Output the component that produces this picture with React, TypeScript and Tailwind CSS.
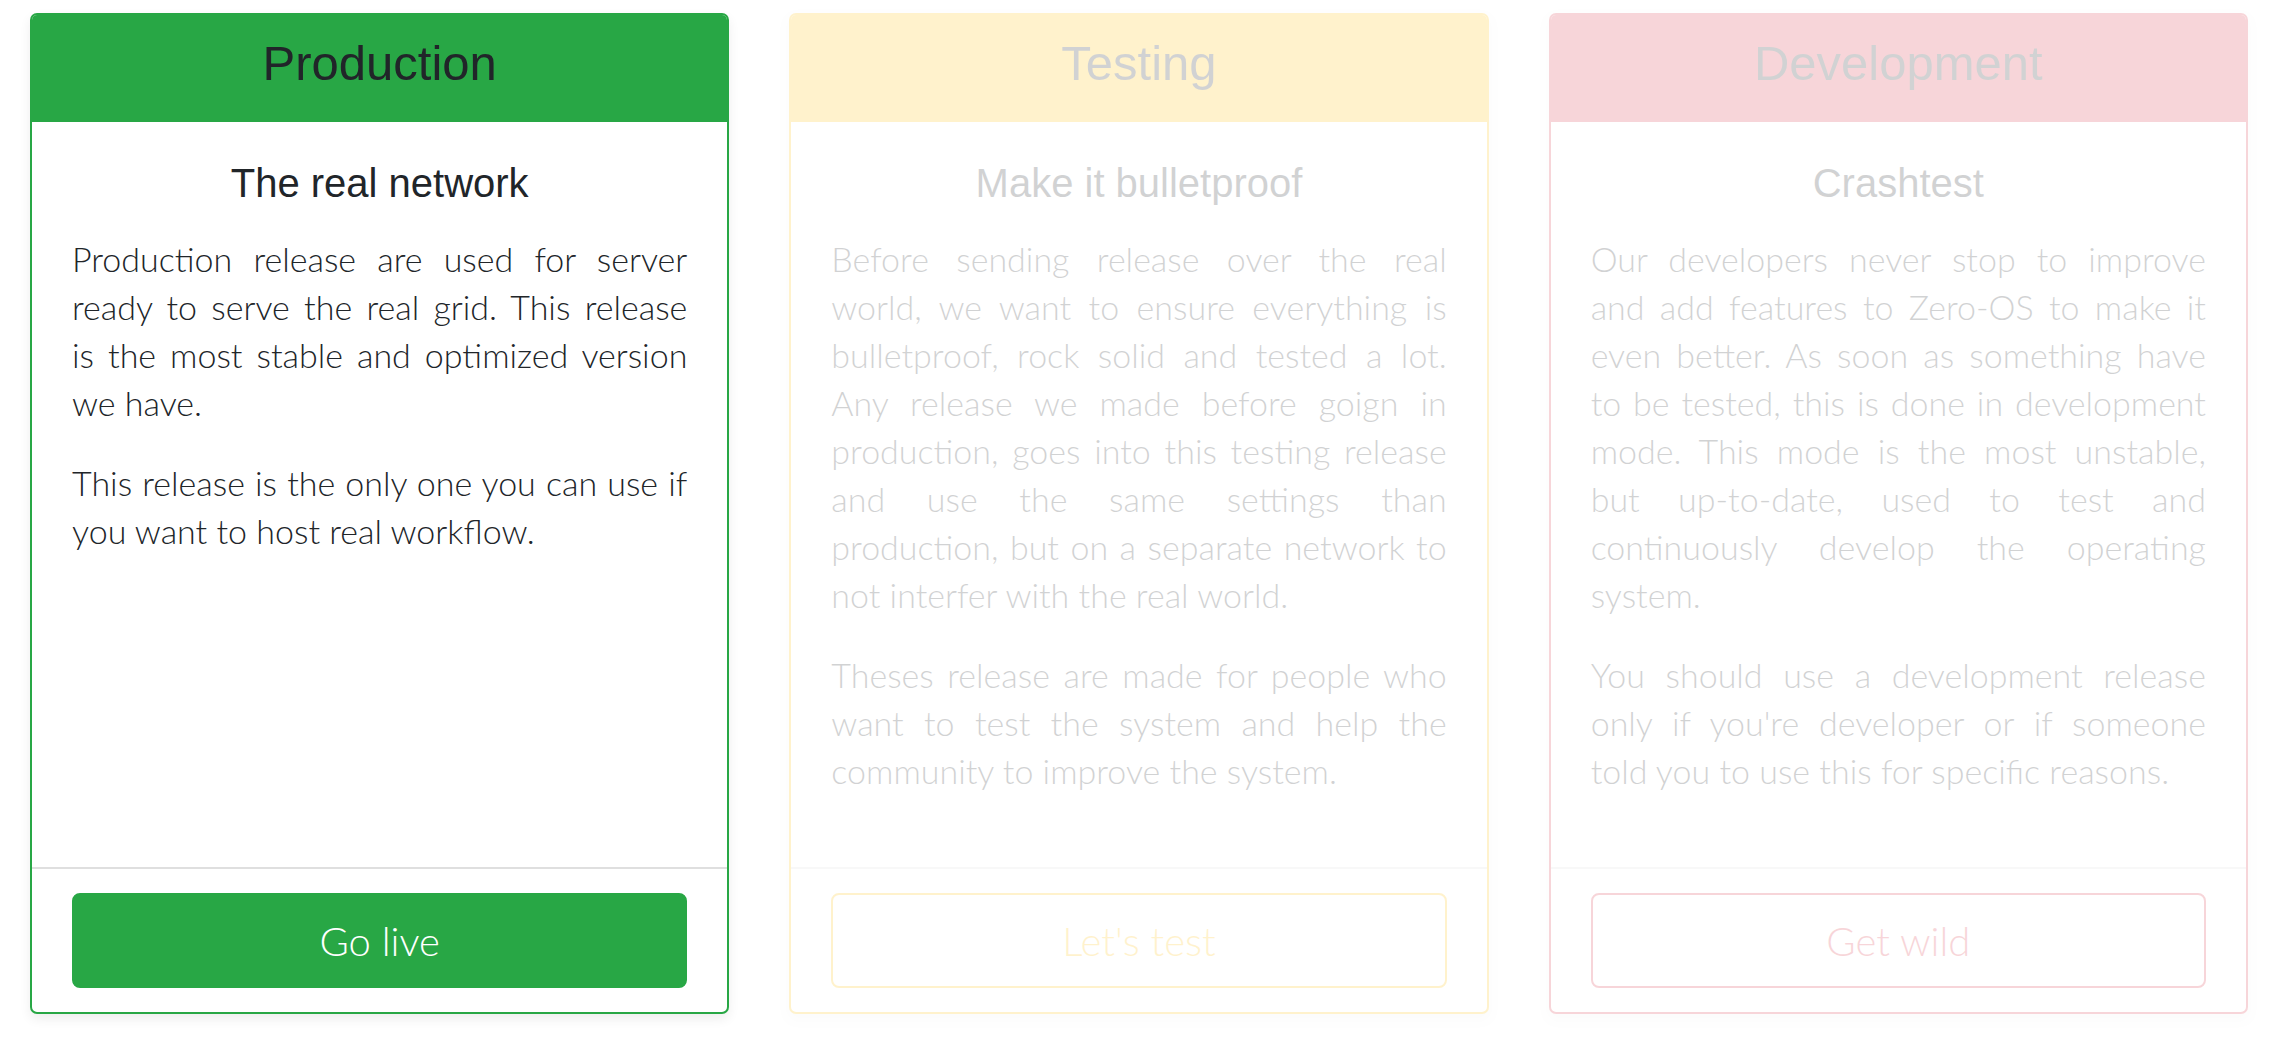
import React from "react";

type Card = {
  title: string;
  subtitle: string;
  paragraphs: string[][];
  button: string;
  cardCls: string;
  headerCls: string;
  buttonCls: string;
};

const cards: Card[] = [
  {
    title: "Production",
    subtitle: "The real network",
    paragraphs: [
      [
        "Production release are used for server",
        "ready to serve the real grid. This release",
        "is the most stable and optimized version",
        "we have.",
      ],
      ["This release is the only one you can use if", "you want to host real workflow."],
    ],
    button: "Go live",
    cardCls: "border-[#28a745]",
    headerCls: "bg-[#28a745]",
    buttonCls: "bg-[#28a745] border-[#28a745] text-white",
  },
  {
    title: "Testing",
    subtitle: "Make it bulletproof",
    paragraphs: [
      [
        "Before sending release over the real",
        "world, we want to ensure everything is",
        "bulletproof, rock solid and tested a lot.",
        "Any release we made before goign in",
        "production, goes into this testing release",
        "and use the same settings than",
        "production, but on a separate network to",
        "not interfer with the real world.",
      ],
      [
        "Theses release are made for people who",
        "want to test the system and help the",
        "community to improve the system.",
      ],
    ],
    button: "Let's test",
    cardCls: "border-[#ffc107] opacity-20",
    headerCls: "bg-[#ffc107]",
    buttonCls: "bg-white border-[#ffc107] text-[#ffc107]",
  },
  {
    title: "Development",
    subtitle: "Crashtest",
    paragraphs: [
      [
        "Our developers never stop to improve",
        "and add features to Zero-OS to make it",
        "even better. As soon as something have",
        "to be tested, this is done in development",
        "mode. This mode is the most unstable,",
        "but up-to-date, used to test and",
        "continuously develop the operating",
        "system.",
      ],
      [
        "You should use a development release",
        "only if you're developer or if someone",
        "told you to use this for specific reasons.",
      ],
    ],
    button: "Get wild",
    cardCls: "border-[#dc3545] opacity-20",
    headerCls: "bg-[#dc3545]",
    buttonCls: "bg-white border-[#dc3545] text-[#dc3545]",
  },
];

function ReleaseCard({ card }: { card: Card }) {
  return (
    <div
      className={`flex flex-col h-full border-2 rounded-[7px] overflow-hidden bg-white shadow-[0_5px_12px_rgba(0,0,0,0.07)] ${card.cardCls}`}
    >
      <div className={`pt-[20px] pb-[31px] text-center ${card.headerCls}`}>
        <h2 className="font-['Liberation_Sans',Arial,sans-serif] text-[49px] leading-[56px] text-[#212529] font-normal">
          {card.title}
        </h2>
      </div>
      <div className="flex-1 px-[40px] pt-[39px] pb-[40px] text-[#212529]">
        <h4 className="font-['Liberation_Sans',Arial,sans-serif] text-[40px] leading-[44px] text-center mb-[30px] font-normal">
          {card.subtitle}
        </h4>
        {card.paragraphs.map((lines, pi) => (
          <p
            key={pi}
            className="font-['Lato','Noto_Sans',sans-serif] font-light text-[34px] leading-[48px] mb-[32px]"
          >
            {lines.map((line, li) => (
              <span
                key={li}
                className={
                  li < lines.length - 1
                    ? "block whitespace-nowrap text-justify [text-align-last:justify]"
                    : "block whitespace-nowrap text-left"
                }
              >
                {line}
              </span>
            ))}
          </p>
        ))}
      </div>
      <div className="border-t-2 border-[#dfdfdf] px-[40px] py-[24px]">
        <button
          className={`w-full h-[95px] rounded-[8px] border-2 font-['Lato','Noto_Sans',sans-serif] font-light text-[40px] ${card.buttonCls}`}
        >
          {card.button}
        </button>
      </div>
    </div>
  );
}

export default function App() {
  return (
    <div className="w-full min-h-[1039px] bg-white pt-[13px]">
      <div className="grid grid-cols-3">
        {cards.map((c) => (
          <div key={c.title} className="px-[30px]">
            <ReleaseCard card={c} />
          </div>
        ))}
      </div>
    </div>
  );
}
